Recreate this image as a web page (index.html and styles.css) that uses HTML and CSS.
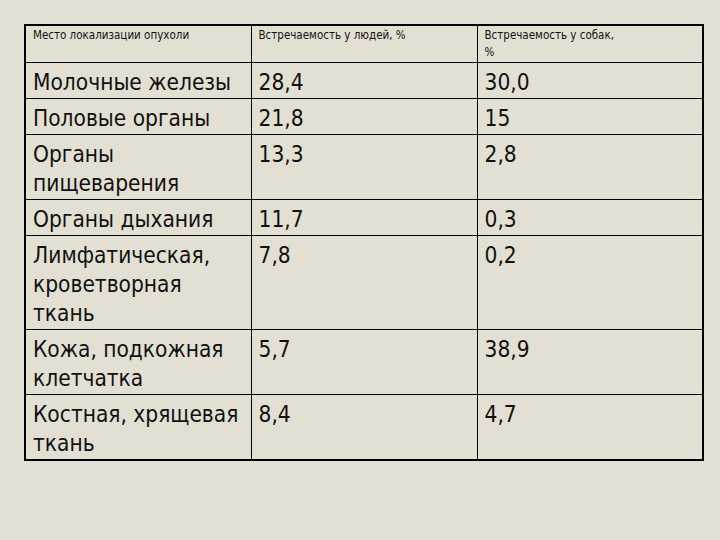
FILE: index.html
```html
<!DOCTYPE html>
<html lang="ru">
<head>
<meta charset="utf-8">
<title>Таблица</title>
<link rel="stylesheet" href="styles.css">
</head>
<body>
<div class="page">
  <table class="data">
    <colgroup><col class="c"><col class="c"><col class="c"></colgroup>
    <tr class="head">
      <td>Место локализации опухоли</td>
      <td>Встречаемость у людей, %</td>
      <td>Встречаемость у собак,<br>%</td>
    </tr>
    <tr><td>Молочные железы</td><td>28,4</td><td>30,0</td></tr>
    <tr><td>Половые органы</td><td>21,8</td><td>15</td></tr>
    <tr><td>Органы<br>пищеварения</td><td>13,3</td><td>2,8</td></tr>
    <tr><td>Органы дыхания</td><td>11,7</td><td>0,3</td></tr>
    <tr><td>Лимфатическая,<br>кроветворная<br>ткань</td><td>7,8</td><td>0,2</td></tr>
    <tr><td>Кожа, подкожная<br>клетчатка</td><td>5,7</td><td>38,9</td></tr>
    <tr><td>Костная, хрящевая<br>ткань</td><td>8,4</td><td>4,7</td></tr>
  </table>
</div>
</body>
</html>
```

FILE: styles.css
```css
html, body {
  margin: 0;
  padding: 0;
  background: #e3e0d3;
}
.page {
  width: 720px;
  height: 540px;
  padding: 24px 0 0 24px;
  box-sizing: border-box;
  background: #e3e0d3;
}
.data {
  border-collapse: collapse;
  table-layout: fixed;
  width: 677px;
  border: 2px solid #000;
  font-family: "DejaVu Sans Condensed", "DejaVu Sans", Verdana, sans-serif;
  color: #111;
}
.data col.c { width: 226px; }
.data td {
  border: 1px solid #000;
  vertical-align: top;
  padding: 5px 5px 1px 7px;
  font-size: 22.5px;
  line-height: 29px;
  white-space: nowrap;
}
.data tr.head td {
  font-size: 11.5px;
  line-height: 17px;
  padding: 1px 5px 1px 7px;
}
```
